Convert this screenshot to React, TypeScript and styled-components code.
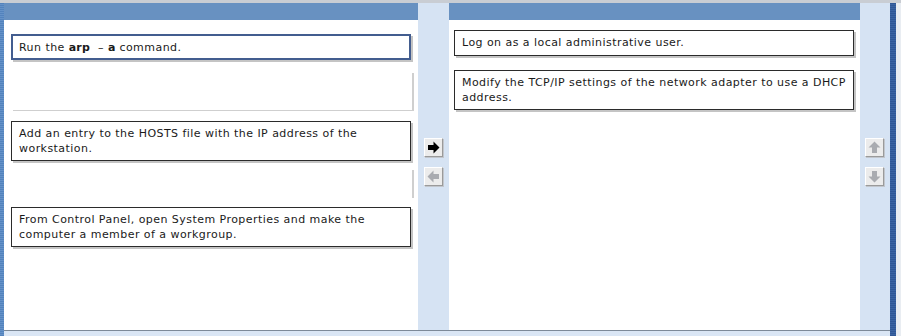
import React from "react";
import styled, { createGlobalStyle } from "styled-components";

const GlobalStyle = createGlobalStyle`
  html, body {
    margin: 0;
    padding: 0;
    background: #ffffff;
  }
  body {
    font-family: "DejaVu Sans", Verdana, sans-serif;
  }
`;

const Frame = styled.div`
  width: 901px;
  height: 336px;
  display: grid;
  grid-template-columns: 4px 414px 31px 411px 30px 6px 5px;
  grid-template-rows: 3px 17px 310px 6px;
  overflow: hidden;
  background: #ffffff;
`;

const TopStrip = styled.div`
  grid-column: 1 / -1;
  grid-row: 1;
  background: #c9cdd3;
`;

const LeftStripe = styled.div`
  grid-column: 1;
  grid-row: 2 / 5;
  background: repeating-linear-gradient(
    180deg,
    #5383bd 0px,
    #5383bd 1px,
    #6592c8 1px,
    #6592c8 2px
  );
`;

const PanelHeader = styled.div<{ $col: number }>`
  grid-column: ${(p) => p.$col};
  grid-row: 2;
  background: #6891c1;
`;

const PanelBody = styled.div<{ $col: number; $pad: string }>`
  grid-column: ${(p) => p.$col};
  grid-row: 3;
  background: #ffffff;
  padding: ${(p) => p.$pad};
  display: flex;
  flex-direction: column;
  align-items: flex-start;
`;

const SideColumn = styled.div<{ $col: number; $padLeft: number }>`
  grid-column: ${(p) => p.$col};
  grid-row: 2 / 4;
  background: #d6e3f3;
  display: flex;
  flex-direction: column;
  gap: 10px;
  padding: 135px 0 0 ${(p) => p.$padLeft}px;
`;

const RightBorder = styled.div`
  grid-column: 6;
  grid-row: 2 / 5;
  background: repeating-linear-gradient(
    180deg,
    #2f5796 0px,
    #2f5796 1px,
    #3b64a3 1px,
    #3b64a3 2px
  );
`;

const RightEdge = styled.div`
  grid-column: 7;
  grid-row: 2 / 5;
  background: #e9edf2;
`;

const BottomStrip = styled.div`
  grid-column: 2 / 6;
  grid-row: 4;
  background: #dae6f5;
  border-top: 1px solid #7d8a99;
`;

const Card = styled.div<{ $top: number; $selected?: boolean }>`
  box-sizing: border-box;
  width: 400px;
  min-height: 26px;
  margin-top: ${(p) => p.$top}px;
  padding: ${(p) => (p.$selected ? "4px 6px 3px" : "4px 6px 4px 7px")};
  border: ${(p) => (p.$selected ? "2px solid #435d8f" : "1px solid #2b2b2b")};
  background: #ffffff;
  box-shadow: 2px 2px 0 #c4c4c4;
  font-size: 11px;
  letter-spacing: 0.45px;
  line-height: 15px;
  color: #1a1a1a;
  b {
    font-weight: bold;
    letter-spacing: 0.2px;
  }
`;

const Slot = styled.div<{ $top: number; $height: number; $bottom?: boolean }>`
  box-sizing: border-box;
  width: 401px;
  height: ${(p) => p.$height}px;
  margin-top: ${(p) => p.$top}px;
  margin-left: 2px;
  border-right: 2px solid #cfcfcf;
  border-bottom: ${(p) => (p.$bottom ? "1px solid #cfcfcf" : "none")};
`;

const ArrowButton = styled.button`
  width: 19px;
  height: 19px;
  padding: 0;
  display: flex;
  align-items: center;
  justify-content: center;
  background: #ececec;
  border: 1px solid;
  border-color: #ffffff #9a9a9a #9a9a9a #ffffff;
  box-shadow: 1px 1px 0 #c2c6cc;
  cursor: pointer;
`;

type Dir = "right" | "left" | "up" | "down";

const Arrow = ({ dir, active }: { dir: Dir; active?: boolean }) => {
  const rot = { right: 0, left: 180, up: -90, down: 90 }[dir];
  return (
    <svg width="13" height="13" viewBox="0 0 13 13">
      <path
        d="M1 4 H6.5 V0.5 L12.5 6.5 L6.5 12.5 V9 H1 Z"
        fill={active ? "#000000" : "#a9abb0"}
        transform={`rotate(${rot} 6.5 6.5)`}
      />
    </svg>
  );
};

export default function App() {
  return (
    <>
      <GlobalStyle />
      <Frame>
        <TopStrip />
        <LeftStripe />
        <PanelHeader $col={2} />
        <PanelBody $col={2} $pad="14px 0 0 7px">
          <Card $top={0} $selected>
            Run the <b>arp</b> &nbsp;– <b>a</b> command.
          </Card>
          <Slot $top={13} $height={38} $bottom />
          <Card $top={10}>
            Add an entry to the HOSTS file with the IP address of the
            workstation.
          </Card>
          <Slot $top={9} $height={28} />
          <Card $top={9}>
            From Control Panel, open System Properties and make the computer a
            member of a workgroup.
          </Card>
        </PanelBody>
        <SideColumn $col={3} $padLeft={6}>
          <ArrowButton type="button">
            <Arrow dir="right" active />
          </ArrowButton>
          <ArrowButton type="button">
            <Arrow dir="left" />
          </ArrowButton>
        </SideColumn>
        <PanelHeader $col={4} />
        <PanelBody $col={4} $pad="10px 0 0 5px">
          <Card $top={0}>Log on as a local administrative user.</Card>
          <Card $top={14}>
            Modify the TCP/IP settings of the network adapter to use a DHCP
            address.
          </Card>
        </PanelBody>
        <SideColumn $col={5} $padLeft={5}>
          <ArrowButton type="button">
            <Arrow dir="up" />
          </ArrowButton>
          <ArrowButton type="button">
            <Arrow dir="down" />
          </ArrowButton>
        </SideColumn>
        <RightBorder />
        <RightEdge />
        <BottomStrip />
      </Frame>
    </>
  );
}
